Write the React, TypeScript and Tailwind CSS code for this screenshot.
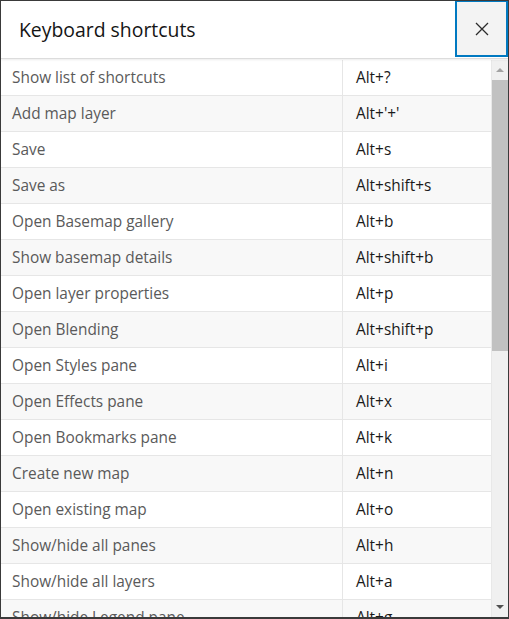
import React from "react"

const shortcuts: [string, string][] = [
  ["Show list of shortcuts", "Alt+?"],
  ["Add map layer", "Alt+'+'"],
  ["Save", "Alt+s"],
  ["Save as", "Alt+shift+s"],
  ["Open Basemap gallery", "Alt+b"],
  ["Show basemap details", "Alt+shift+b"],
  ["Open layer properties", "Alt+p"],
  ["Open Blending", "Alt+shift+p"],
  ["Open Styles pane", "Alt+i"],
  ["Open Effects pane", "Alt+x"],
  ["Open Bookmarks pane", "Alt+k"],
  ["Create new map", "Alt+n"],
  ["Open existing map", "Alt+o"],
  ["Show/hide all panes", "Alt+h"],
  ["Show/hide all layers", "Alt+a"],
  ["Show/hide Legend pane", "Alt+g"],
  ["Show/hide Tables pane", "Alt+t"],
]

function App() {
  return (
    <div
      className="w-[509px] h-[619px] flex flex-col bg-white border border-[#3a3a3a] border-b-2 overflow-hidden"
      style={{ fontFamily: '"Open Sans", "Noto Sans", sans-serif' }}
    >
      {/* header */}
      <div className="flex h-[58px] shrink-0 border-b border-[#dcdcdc] shadow-[0_1px_2px_rgba(0,0,0,0.08)] relative z-10">
        <div className="flex-1 flex items-center pl-[18px] text-[19.4px] text-[#151515]">Keyboard shortcuts</div>
        <button className="w-[53px] h-[57px] -mt-px flex items-center justify-center bg-[#f3f3f3] border-2 border-[#0079c1]">
          <svg width="14" height="14" viewBox="0 0 14 14">
            <path d="M1 1L13 13M13 1L1 13" stroke="#2b2b2b" strokeWidth="1.3" />
          </svg>
        </button>
      </div>

      {/* body */}
      <div className="flex flex-1 min-h-0 mt-px">
        <div className="flex-1 overflow-hidden">
          {shortcuts.map(([label, keys], i) => (
            <div
              key={label}
              className={`flex h-[36px] border-b border-[#e6e6e6] text-[15.4px] ${i % 2 === 1 ? 'bg-[#f8f8f8]' : 'bg-white'}`}
            >
              <div className="w-[342px] shrink-0 flex items-center pl-[11px] text-[#5a5a5a] border-r border-[#e6e6e6]">{label}</div>
              <div className="flex-1 flex items-center pl-[13px] text-[#1a1a1a]">{keys}</div>
            </div>
          ))}
        </div>
        {/* scrollbar */}
        <div className="w-[17px] shrink-0 bg-[#f0f0f0] border-l border-[#e8e8e8] flex flex-col">
          <div className="h-[20px] flex items-center justify-center">
            <div className="w-0 h-0 border-x-[4px] border-x-transparent border-b-[4px] border-b-[#a3a3a3]" />
          </div>
          <div className="h-[271px] bg-[#c1c1c1]" />
          <div className="flex-1" />
          <div className="h-[20px] flex items-center justify-center">
            <div className="w-0 h-0 border-x-[4px] border-x-transparent border-t-[4px] border-t-[#505050]" />
          </div>
        </div>
      </div>
    </div>
  )
}

export default App
